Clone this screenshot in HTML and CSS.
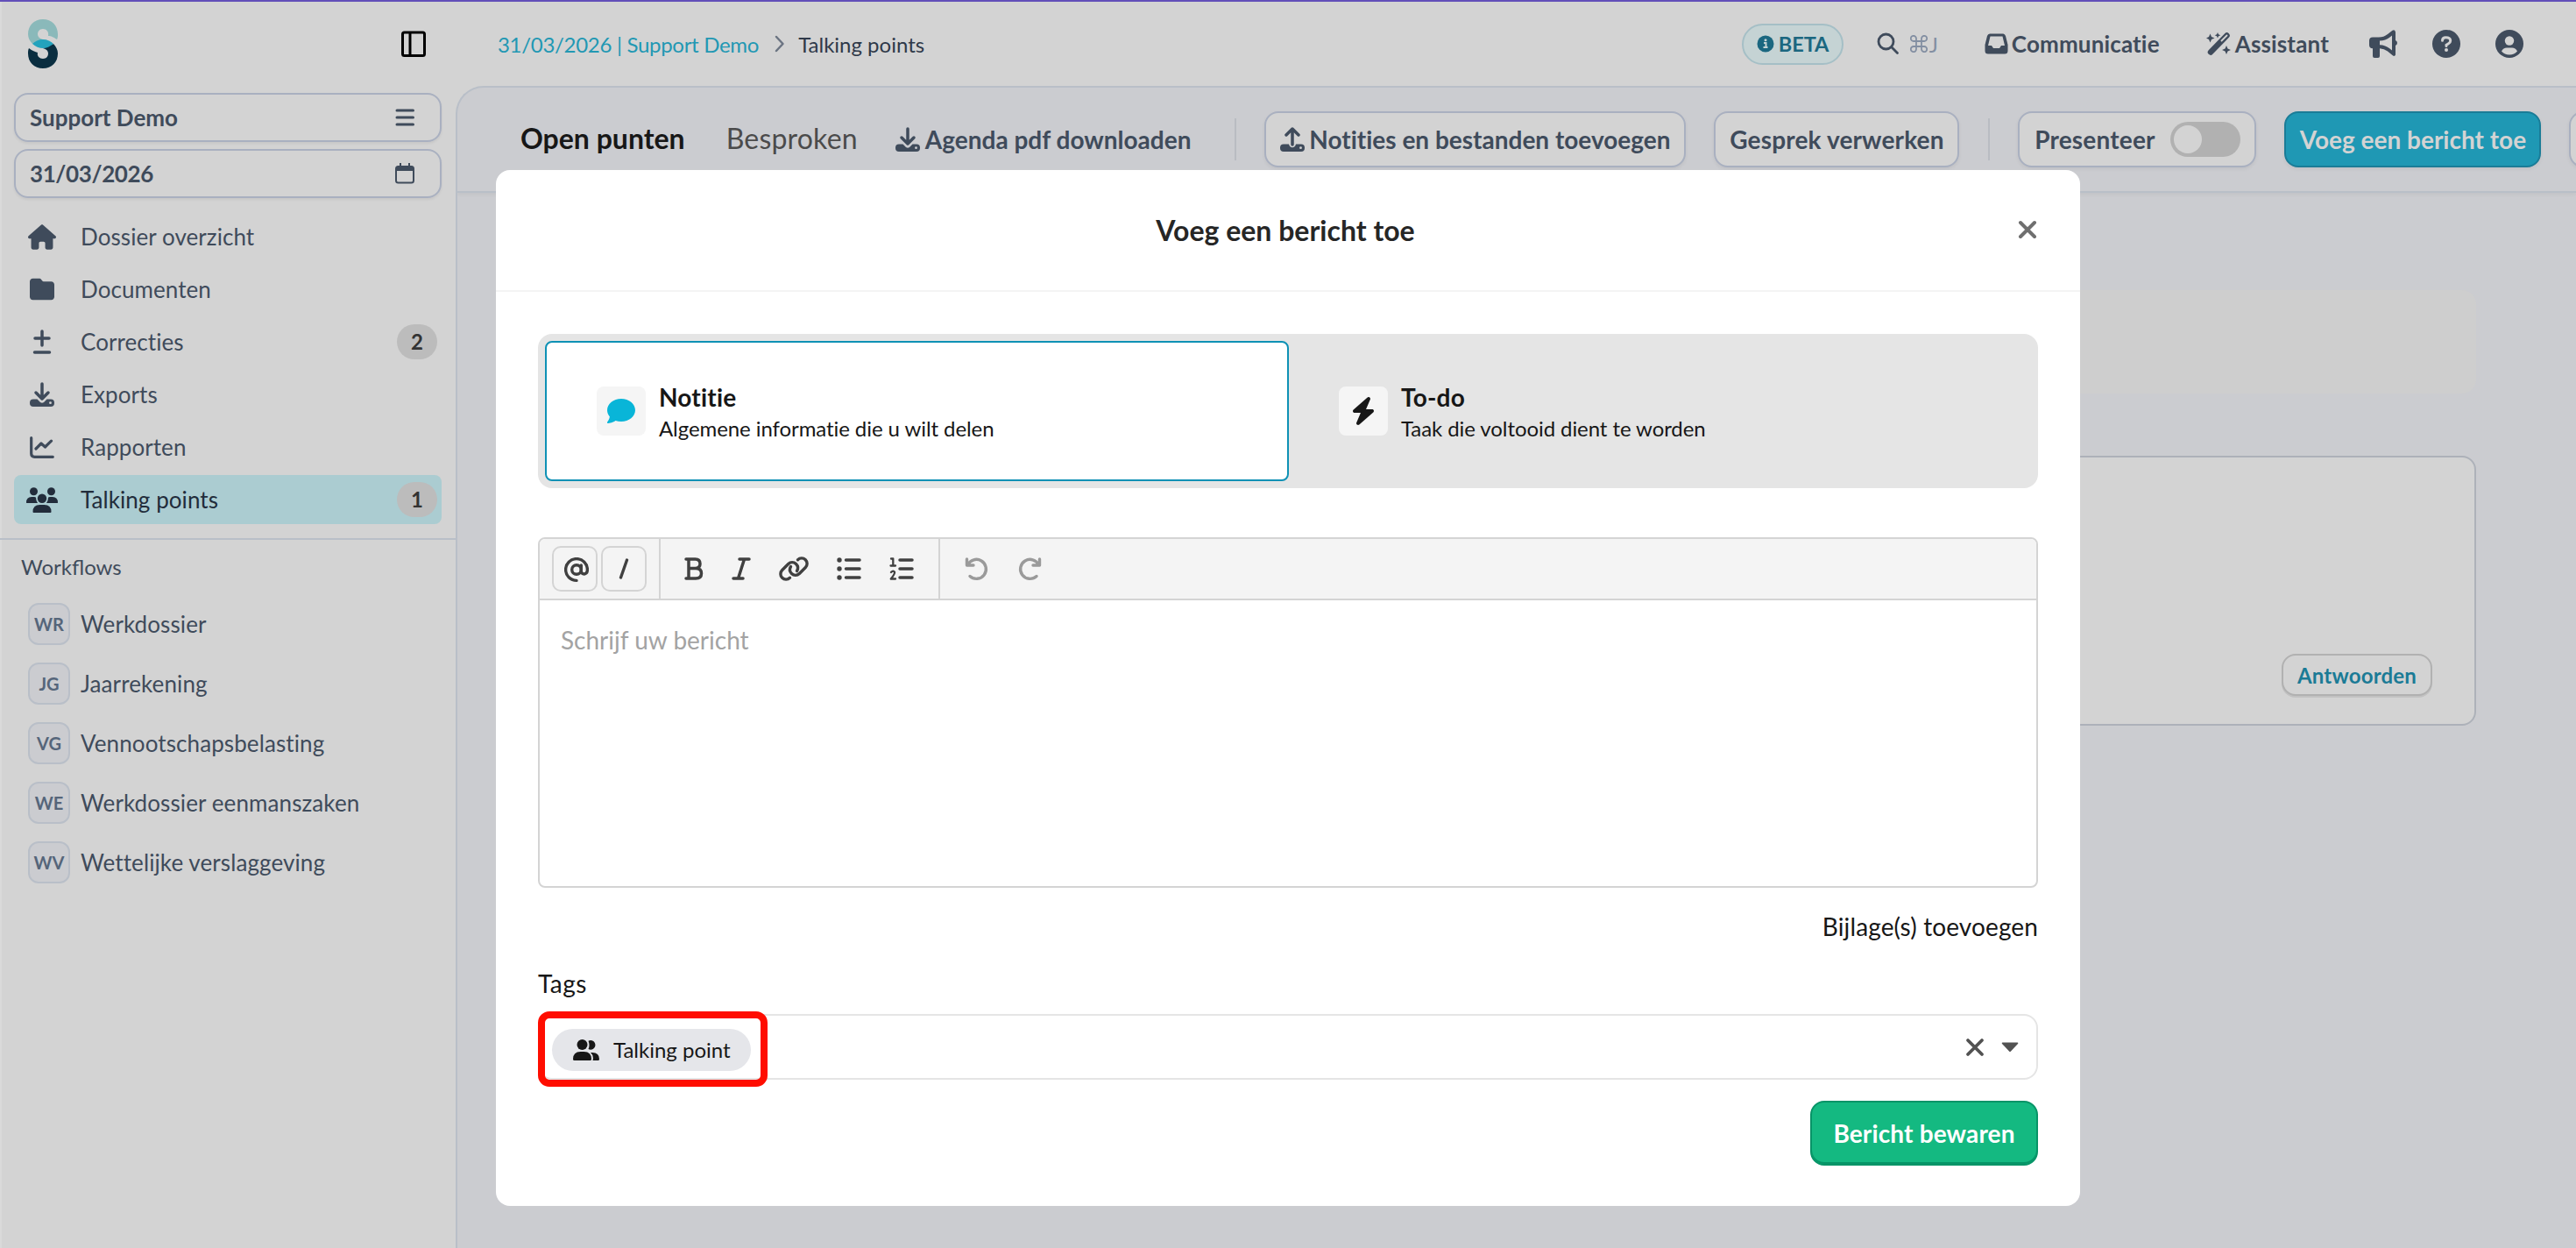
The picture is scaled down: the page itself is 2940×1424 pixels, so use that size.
FILE: index.html
```
<!DOCTYPE html>
<html lang="nl">
<head>
    <meta charset="UTF-8">
    <meta name="viewport" content="width=device-width, initial-scale=1.0">
    <title>Talking points</title>
    <link rel="stylesheet" href="styles.css">
</head>
<body>

<div class="app">
    <aside class="sidebar">
        <div class="sidebar-top">
            <svg class="logo" width="34" height="56" viewBox="0 0 34 56">
                <path d="M5 28 C2 25 0 21 0 17 C0 7 7 0 17 0 C27 0 34 7 34 17 C34 19 34 21 33 23 C28 20 27 19 23 19 C24 14 21 11 17 11 C13 11 11 14 11 17 C11 20 13 22 17 23 L28 28 Z" fill="#8ab9ba"/>
                <path d="M1 33 C5 36 8 37 11 38 C10 42 13 45 17 45 C21 45 23 42 23 39 C23 36 21 34 17 33 L29 28 C32 31 34 35 34 39 C34 49 27 56 17 56 C7 56 0 49 0 39 C0 37 0 35 1 33 Z" fill="#0a2e40"/>
                <path d="M5 28 C8 25 12 23 17 23 C22 23 26 25 29 28 C25 31 21 33 17 33 C13 33 8 31 5 28 Z" fill="#23a3bd"/>
            </svg>
            <svg width="28" height="30" viewBox="0 0 28 30" fill="none" stroke="#000" stroke-width="3">
                <rect x="1.5" y="2" width="25" height="26.5" rx="2"/>
                <path d="M10 2 V28"/>
            </svg>
        </div>

        <div class="select-box">
            <span>Support Demo</span>
            <svg width="24" height="22" viewBox="0 0 24 22" stroke="#3f4b5b" stroke-width="3" stroke-linecap="round">
                <path d="M3 3 H21.500 M3 11 H21.500 M3 19 H21.500"/>
            </svg>
        </div>
        <div class="select-box date">
            <span>31/03/2026</span>
            <svg width="24" height="26" viewBox="0 0 24 26">
                <rect x="2" y="5" width="20" height="18.500" rx="2.500" fill="none" stroke="#3f4b5b" stroke-width="2"/>
                <path d="M2 5 H22 V10 H2 Z M6 1 h2 v4 h-2 Z M16 1 h2 v4 h-2 Z" fill="#3f4b5b"/>
            </svg>
        </div>

        <nav class="menu">
            <a class="menu-item">
                <span class="menu-icon"><svg width="32" height="29" viewBox="0 0 576 512" fill="currentColor"><path d="M575.8 255.5c0 18-15 32.100-32 32.100h-32l.7 160.200c0 2.700-.2 5.400-.5 8.100V472c0 22.100-17.900 40-40 40H392c-22.100 0-40-17.900-40-40V384c0-17.700-14.300-32-32-32H256c-17.700 0-32 14.300-32 32v88c0 22.100-17.900 40-40 40H104c-22.100 0-40-17.900-40-40V287.600H32c-18 0-32-14-32-32.100c0-9 3-17 10-24L266.400 8c7-7 15-8 22-8s15 2 21 7L564.800 231.500c8 7 12 15 11 24z"/></svg></span>
                <span>Dossier overzicht</span>
            </a>
            <a class="menu-item">
                <span class="menu-icon"><svg width="28" height="28" viewBox="0 0 512 512" fill="currentColor"><path d="M64 480H448c35.300 0 64-28.700 64-64V160c0-35.300-28.700-64-64-64H288c-10.100 0-19.600-4.700-25.600-12.800L243.200 57.600C231.100 41.500 212.100 32 192 32H64C28.700 32 0 60.700 0 96V416c0 35.300 28.700 64 64 64z"/></svg></span>
                <span>Documenten</span>
            </a>
            <a class="menu-item">
                <span class="menu-icon"><svg width="22" height="28" viewBox="0 0 22 28" stroke="currentColor" stroke-width="3.500" stroke-linecap="round"><path d="M11 2 V18 M3 10 H19 M2.500 26 H19.500"/></svg></span>
                <span>Correcties</span>
                <span class="count">2</span>
            </a>
            <a class="menu-item">
                <span class="menu-icon"><svg width="28" height="28" viewBox="0 0 28 28" fill="none"><path d="M4 19.500 H8.500 L12 23 Q14 24.500 16 23 L19.500 19.500 H24 Q28 19.500 28 23.500 V24 Q28 28 24 28 H4 Q0 28 0 24 V23.500 Q0 19.500 4 19.500 Z" fill="currentColor"/><circle cx="23.500" cy="23.700" r="1.400" fill="#d3d3d3"/><path d="M14 2 V18.500 M7 12 L14 19 L21 12" stroke="currentColor" stroke-width="3.500" stroke-linecap="round" stroke-linejoin="round"/></svg></span>
                <span>Exports</span>
            </a>
            <a class="menu-item">
                <span class="menu-icon"><svg width="28" height="25" viewBox="0 0 28 25" fill="none" stroke="currentColor" stroke-width="3.200" stroke-linecap="round" stroke-linejoin="round"><path d="M1.700 1.700 V19.500 Q1.700 23.300 5.500 23.300 H26.300 M7 14 L13 8 L17.500 12 L24.500 5.200"/></svg></span>
                <span>Rapporten</span>
            </a>
            <a class="menu-item active">
                <span class="menu-icon"><svg width="36" height="29" viewBox="0 0 36 29" fill="currentColor"><circle cx="8.500" cy="4.800" r="4.500"/><circle cx="28.500" cy="4.800" r="4.500"/><circle cx="18" cy="12.800" r="5.200"/><path d="M0 17.500 Q0 11 6 11 H9 Q11 11 11 12 Q11 15.500 13 18 H1 Q0 18 0 17.500 Z M36 17.500 Q36 11 30 11 H27 Q25 11 25 12 Q25 15.500 23 18 H35 Q36 18 36 17.500 Z M7.500 28 Q7.500 20 15.500 20 H20.500 Q28.500 20 28.500 28 Q28.500 29 27.500 29 H8.500 Q7.500 29 7.500 28 Z"/></svg></span>
                <span>Talking points</span>
                <span class="count">1</span>
            </a>
        </nav>

        <div class="workflows">
            <div class="workflows-title">Workflows</div>
            <a class="workflow"><span class="code">WR</span>Werkdossier</a>
            <a class="workflow"><span class="code">JG</span>Jaarrekening</a>
            <a class="workflow"><span class="code">VG</span>Vennootschapsbelasting</a>
            <a class="workflow"><span class="code">WE</span>Werkdossier eenmanszaken</a>
            <a class="workflow"><span class="code">WV</span>Wettelijke verslaggeving</a>
        </div>
    </aside>

    <main class="main">
        <header class="topbar">
            <div class="breadcrumb">
                <a>31/03/2026 | Support Demo</a>
                <svg width="12" height="20" viewBox="0 0 12 20" fill="none" stroke="#6b7482" stroke-width="2.500" stroke-linecap="round" stroke-linejoin="round"><path d="M2 2 L9.500 10 L2 18"/></svg>
                <span>Talking points</span>
            </div>
            <div class="top-actions">
                <span class="beta">
                    <svg width="20" height="20" viewBox="0 0 20 20"><circle cx="10" cy="10" r="9.500" fill="#1b6780"/><circle cx="10" cy="5.800" r="1.500" fill="#c5d3d4"/><path d="M8 9 H10.500 V14 M7.500 14 H12.500" stroke="#c5d3d4" stroke-width="2" fill="none"/></svg>
                    BETA
                </span>
                <span class="search">
                    <svg width="26" height="26" viewBox="0 0 26 26" fill="none" stroke="#3f4b5b" stroke-width="2.800" stroke-linecap="round"><circle cx="10.500" cy="10.500" r="8.500"/><path d="M16.800 16.800 L23.500 23.500"/></svg>
                    <span class="shortcut">
                        <svg width="20" height="20" viewBox="0 0 20 20" fill="none" stroke="#838fa2" stroke-width="1.800"><path d="M7 13 H4.200 A3.100 3.100 0 1 0 7 16 V4 A3.100 3.100 0 1 0 4 7 H16 A3.100 3.100 0 1 0 13 4 V16 A3.100 3.100 0 1 0 16 13 Z"/></svg>J
                    </span>
                </span>
                <a class="top-link communicatie">
                    <svg width="27" height="24" viewBox="0 0 27 24"><path d="M6 0.500 H21 Q23.200 0.500 24 3 L26.500 13 V20 Q26.500 23.500 23 23.500 H4 Q0.500 23.500 0.500 20 V13 L3 3 Q3.800 0.500 6 0.500 Z M6.500 3.500 L4 14 H8 L10 17 H17 L19 14 H23 L20.500 3.500 Z" fill="#3f4b5b" fill-rule="evenodd"/></svg>
                    Communicatie
                </a>
                <a class="top-link assistant">
                    <svg width="28" height="26" viewBox="0 0 28 26"><path d="M5 22.500 L23.500 3.500" stroke="#3f4b5b" stroke-width="6.500" stroke-linecap="round"/><path d="M17.500 9.500 L23.500 3.500" stroke="#d3d3d3" stroke-width="1.800" stroke-linecap="round"/><path d="M4.500 1.500 L6 5 L9.500 6.500 L6 8 L4.500 11.500 L3 8 L0 6.500 L3 5 Z M13 0 L14 2.300 L16.300 3.300 L14 4.300 L13 6.600 L12 4.300 L9.700 3.300 L12 2.300 Z M23 15 L24.500 18.500 L28 20 L24.500 21.500 L23 25 L21.500 21.500 L18 20 L21.500 18.500 Z" fill="#3f4b5b"/></svg>
                    Assistant
                </a>
                <svg class="top-icon" width="32" height="32" viewBox="0 0 32 32"><path d="M30 2.500 V12 Q32 13 32 15 Q32 17 30 18 V28.500 Q29 31 26.500 29 L21 24.500 Q17 21.500 12 21.300 V30 Q12 32 10 32 H6 Q4 32 4 30 V21.300 Q0 21.300 0 17.300 V12.500 Q0 8.500 4 8.500 H11 Q16.500 8.500 21 5 L26.500 0.800 Q29 -1 30 2.500 Z M26 6.500 L23.500 8.500 Q18.500 12.500 12 12.500 V17.300 Q18.500 17.500 23.500 21.500 L26 23.500 Z" fill="#3f4b5b" fill-rule="evenodd"/></svg>
                <svg class="top-icon" width="32" height="32" viewBox="0 0 32 32" fill="none"><circle cx="16" cy="16" r="16" fill="#3f4b5b"/><path d="M11.500 12.300 Q11.500 8.700 15.500 8.700 Q20.700 8.700 20.700 12.500 Q20.700 14.500 18.500 15.700 L16 17.300 V18.500" stroke="#d3d3d3" stroke-width="3" stroke-linecap="round"/><circle cx="16" cy="23" r="2" fill="#d3d3d3"/></svg>
                <svg class="top-icon" width="32" height="32" viewBox="0 0 32 32"><circle cx="16" cy="16" r="16" fill="#3f4b5b"/><circle cx="16" cy="12.500" r="5.200" fill="#d3d3d3"/><path d="M7 24.500 Q9 20.500 13 20.500 H19 Q23 20.500 25 24.500 Q21.500 28.500 16 28.500 Q10.500 28.500 7 24.500 Z" fill="#d3d3d3"/></svg>
            </div>
        </header>

        <section class="panel">
            <div class="toolbar">
                <span class="tab tab-active">Open punten</span>
                <span class="tab">Besproken</span>
                <a class="agenda">
                    <svg width="28" height="28" viewBox="0 0 28 28" fill="none"><path d="M4 19.500 H8.500 L12 23 Q14 24.500 16 23 L19.500 19.500 H24 Q28 19.500 28 23.500 V24 Q28 28 24 28 H4 Q0 28 0 24 V23.500 Q0 19.500 4 19.500 Z" fill="#3f4b5b"/><circle cx="23.500" cy="23.700" r="1.400" fill="#cbccd0"/><path d="M14 2 V18.500 M7 12 L14 19 L21 12" stroke="#3f4b5b" stroke-width="3.500" stroke-linecap="round" stroke-linejoin="round"/></svg>
                    Agenda pdf downloaden
                </a>
                <span class="divider"></span>
                <button class="btn btn-notes">
                    <svg width="28" height="28" viewBox="0 0 28 28" fill="none"><path d="M4 19.500 H10 Q11 23.300 14 23.300 Q17 23.300 18 19.500 H24 Q28 19.500 28 23.500 V24 Q28 28 24 28 H4 Q0 28 0 24 V23.500 Q0 19.500 4 19.500 Z" fill="#3f4b5b"/><circle cx="23.500" cy="23.700" r="1.400" fill="#d3d3d3"/><path d="M14 20 V2.500 M7 9 L14 2 L21 9" stroke="#3f4b5b" stroke-width="3.500" stroke-linecap="round" stroke-linejoin="round"/></svg>
                    Notities en bestanden toevoegen
                </button>
                <button class="btn btn-process">Gesprek verwerken</button>
                <span class="divider"></span>
                <button class="btn btn-present">Presenteer <span class="toggle"></span></button>
                <button class="btn btn-primary">Voeg een bericht toe</button>
                <button class="btn btn-more"></button>
            </div>
            <div class="content">
                <div class="notice"></div>
                <div class="card">
                    <button class="reply">Antwoorden</button>
                </div>
            </div>
        </section>
    </main>
</div>

<div class="modal">
    <div class="modal-header">
        <h2>Voeg een bericht toe</h2>
        <svg class="modal-close" width="22" height="22" viewBox="0 0 22 22" stroke="#6f6f6f" stroke-width="4" stroke-linecap="round"><path d="M3 3 L19 19 M19 3 L3 19"/></svg>
    </div>
    <div class="modal-body">
        <div class="types">
            <div class="type selected">
                <span class="type-icon"><svg width="32" height="32" viewBox="0 0 512 512" fill="#09b5d8"><path d="M512 240c0 114.900-114.600 208-256 208c-37.100 0-72.300-6.400-104.100-17.900c-11.900 8.700-31.300 20.600-54.300 30.600C73.600 471.100 44.700 480 16 480c-6.500 0-12.300-3.900-14.800-9.900c-2.500-6-1.100-12.800 3.400-17.400c10-10 32-40 41.800-91.900C17.700 326.800 0 285.100 0 240C0 125.100 114.600 32 256 32s256 93.100 256 208z"/></svg></span>
                <div>
                    <div class="type-title">Notitie</div>
                    <div class="type-text">Algemene informatie die u wilt delen</div>
                </div>
            </div>
            <div class="type">
                <span class="type-icon"><svg width="28" height="32" viewBox="0 0 448 512" fill="#171717"><path d="M349.400 44.600c5.900-13.700 1.500-29.700-10.600-38.500s-28.600-8-39.900 1.800l-256 224c-10 8.800-13.600 22.900-8.900 35.300S50.700 288 64 288H175.500L98.600 467.400c-5.900 13.700-1.500 29.700 10.600 38.500s28.600 8 39.900-1.800l256-224c10-8.800 13.600-22.900 8.900-35.300s-16.600-20.700-30-20.700H272.500L349.400 44.600z"/></svg></span>
                <div>
                    <div class="type-title">To-do</div>
                    <div class="type-text">Taak die voltooid dient te worden</div>
                </div>
            </div>
        </div>

        <div class="editor">
            <div class="editor-bar">
                <div class="group group-keys">
                    <span class="key key-at"><svg width="28" height="29" viewBox="0 0 28 29" fill="none" stroke="#404040" stroke-width="3.400" stroke-linecap="round"><circle cx="14" cy="14" r="5.300"/><path d="M19.300 9 V15.500 Q19.500 19 22.800 19 Q26.400 18.500 26.400 14 A12.400 12.400 0 1 0 14 26.400"/></svg></span>
                    <span class="key"><svg width="12" height="24" viewBox="0 0 12 24" stroke="#404040" stroke-width="3.400" stroke-linecap="round"><path d="M9.500 2 L2.500 22"/></svg></span>
                </div>
                <div class="group group-format">
                    <svg width="22" height="26" viewBox="0 0 22 26" fill="none" stroke="#404040" stroke-width="3.500" stroke-linecap="round" stroke-linejoin="round"><path d="M2 2 H12.500 Q18 2 18 7.300 Q18 12.500 12.500 12.500 H5 M13 12.500 Q19.500 12.500 19.500 18.200 Q19.500 24 13 24 H2 M5 2 V24"/></svg>
                    <svg width="22" height="26" viewBox="0 0 22 26" fill="none" stroke="#404040" stroke-width="3.500" stroke-linecap="round"><path d="M9 2 H20 M2 24 H13 M14.500 2 L7.500 24"/></svg>
                    <svg width="34" height="28" viewBox="0 0 34 28" fill="none" stroke="#404040" stroke-width="3.400" stroke-linecap="round"><path d="M12.500 24.300 A6.200 6.200 0 0 1 3.700 15.500 L10.700 8.500 A6.200 6.200 0 0 1 19.500 8.500 A6.500 6.500 0 0 1 20.500 16.500"/><path d="M21.500 3.700 A6.200 6.200 0 0 1 30.300 12.500 L23.300 19.500 A6.200 6.200 0 0 1 14.500 19.500 A6.500 6.500 0 0 1 13.500 11.500"/></svg>
                    <svg width="28" height="28" viewBox="0 0 28 28" stroke="#404040" stroke-width="3.500" stroke-linecap="round"><path d="M10.500 4 H26 M10.500 14 H26 M10.500 24 H26"/><g fill="#404040" stroke="none"><circle cx="3" cy="4" r="2.700"/><circle cx="3" cy="14" r="2.700"/><circle cx="3" cy="24" r="2.700"/></g></svg>
                    <svg width="28" height="28" viewBox="0 0 28 28" fill="none" stroke="#404040" stroke-width="3.500" stroke-linecap="round"><path d="M12 4 H26 M12 14 H26 M12 24 H26"/><path d="M2 2.500 H4.300 V10 M1.500 10.500 H7 M2 18 Q4.500 15.500 6 17.700 Q6.500 19.700 1.800 25.500 H7" stroke-width="2.300" stroke-linejoin="round"/></svg>
                </div>
                <div class="group group-history">
                    <svg width="27" height="28" viewBox="0 0 27 28" fill="none" stroke="#9a9a9a" stroke-width="3.400" stroke-linecap="round" stroke-linejoin="round"><path d="M2.500 3 V10 H10 M3.500 9.500 A11 11 0 1 1 6 22.500"/></svg>
                    <svg width="27" height="28" viewBox="0 0 27 28" fill="none" stroke="#9a9a9a" stroke-width="3.400" stroke-linecap="round" stroke-linejoin="round"><path d="M24.500 3 V10 H17 M23.500 9.500 A11 11 0 1 0 21 22.500"/></svg>
                </div>
            </div>
            <div class="editor-area">Schrijf uw bericht</div>
        </div>

        <div class="attach">Bijlage(s) toevoegen</div>

        <div class="tags-label">Tags</div>
        <div class="tags-field">
            <span class="chip">
                <svg width="30" height="24" viewBox="0 0 30 24" fill="#171717"><circle cx="10.500" cy="6" r="6"/><path d="M0 22.500 Q0 14 8.500 14 H12.500 Q21 14 21 22.500 Q21 24 19.500 24 H1.500 Q0 24 0 22.500 Z M17.500 1.800 A5.300 5.300 0 1 1 17.500 11 Q19.500 6.500 17.500 1.800 Z M20 15 H22 Q30 15 30 22.500 Q30 24 28.500 24 H22.500 Q24 18.500 20 15 Z"/></svg>
                Talking point
            </span>
            <span class="highlight"></span>
            <svg class="clear" width="22" height="22" viewBox="0 0 22 22" stroke="#525252" stroke-width="3.800" stroke-linecap="round"><path d="M3 3 L19 19 M19 3 L3 19"/></svg>
            <svg class="caret" width="20" height="12" viewBox="0 0 20 12" fill="#525252"><path d="M1.500 0.500 H18.500 Q19.800 0.800 19 2 L11 10.500 Q10 11.500 9 10.500 L1 2 Q0.200 0.800 1.500 0.500 Z"/></svg>
        </div>

        <button class="save">Bericht bewaren</button>
    </div>
</div>

</body>
</html>
```
FILE: styles.css
```
* {
    box-sizing: border-box;
}
body {
    margin: 0;
    height: 1424px;
    overflow: hidden;
    background: #d3d3d3;
    font-family: Lato, "Liberation Sans", sans-serif;
    font-variant-ligatures: none;
    font-size: 28px;
    color: #171717;
}
svg {
    display: block;
    flex-shrink: 0;
}
button {
    font: inherit;
    margin: 0;
}
.app {
    display: flex;
    height: 1424px;
    border-top: 2px solid #624fb9;
}

/* sidebar */
.sidebar {
    width: 520px;
    flex-shrink: 0;
    box-shadow: inset 2px 0 0 #dadada;
    color: #3f4b5b;
    font-size: 26px;
}
.sidebar-top {
    display: flex;
    justify-content: space-between;
    align-items: center;
    height: 104px;
    padding: 0 34px 8px 32px;
}
.select-box {
    display: flex;
    justify-content: space-between;
    align-items: center;
    height: 56px;
    margin: 0 16px 8px;
    padding: 0 28px 0 16px;
    border: 2px solid #a9b0c0;
    border-radius: 16px;
    box-shadow: 0 2px 3px rgba(0, 0, 0, 0.06);
    font-weight: 700;
}
.date {
    letter-spacing: -0.4px;
}
.menu {
    display: flex;
    flex-direction: column;
    gap: 4px;
    padding: 8px 16px 16px;
    border-bottom: 2px solid #b9bfc8;
}
.menu-item {
    display: flex;
    align-items: center;
    height: 56px;
    padding: 0 5px 0 14px;
    border-radius: 8px;
    letter-spacing: 0.07px;
}
.menu-icon {
    display: flex;
    justify-content: center;
    width: 36px;
    margin-right: 26px;
}
.active {
    background: #abccd1;
    color: #222c3b;
}
.count {
    width: 46px;
    height: 40px;
    margin-left: auto;
    border-radius: 20px;
    background: #bcbcbc;
    color: #333;
    font-size: 24px;
    font-weight: 700;
    line-height: 40px;
    text-align: center;
}
.workflows-title {
    height: 62px;
    padding-left: 24px;
    font-size: 24px;
    line-height: 62px;
    letter-spacing: 0;
    font-variant-ligatures: normal;
}
.workflow {
    display: flex;
    align-items: center;
    height: 68px;
    padding-left: 32px;
    letter-spacing: 0.1px;
}
.code {
    width: 48px;
    height: 48px;
    margin-right: 12px;
    border: 2px solid #b9bfc8;
    border-radius: 12px;
    background: #cbccd0;
    color: #55657a;
    font-size: 20px;
    font-weight: 700;
    line-height: 45px;
    letter-spacing: 0;
    text-align: center;
}

/* top bar */
.main {
    flex: 1;
    min-width: 0;
    display: flex;
    flex-direction: column;
}
.topbar {
    display: flex;
    justify-content: space-between;
    align-items: center;
    height: 96px;
    padding: 0 60px 0 48px;
}
.breadcrumb {
    display: flex;
    align-items: center;
    font-size: 24px;
    color: #2f3949;
}
.breadcrumb a {
    color: #2298b3;
    letter-spacing: -0.3px;
}
.breadcrumb svg {
    margin: 0 15px 0 18px;
}
.top-actions {
    display: flex;
    align-items: center;
    color: #3f4b5b;
}
.beta {
    display: flex;
    align-items: center;
    gap: 5px;
    width: 116px;
    height: 47px;
    padding-left: 15px;
    border: 2px solid #a5bfc6;
    border-radius: 24px;
    background: #c5d3d4;
    color: #1b6780;
    font-size: 23.5px;
    font-weight: 700;
}
.search {
    display: flex;
    align-items: center;
    gap: 12px;
    margin: 0 53px 0 38px;
}
.shortcut {
    display: flex;
    align-items: center;
    gap: 2px;
    color: #838fa2;
    font-size: 24px;
}
.top-link {
    display: flex;
    align-items: center;
    gap: 4px;
    font-size: 26px;
    font-weight: 700;
    letter-spacing: 0.15px;
}
.assistant {
    gap: 5px;
    margin: 0 6px 0 53px;
}
.top-icon {
    margin-left: 40px;
}

/* panel with toolbar */
.panel {
    flex: 1;
    overflow: hidden;
    border-top: 2px solid #b9bfc8;
    border-left: 2px solid #b9bfc8;
    border-top-left-radius: 32px;
    background: #cbccd0;
}
.toolbar {
    display: flex;
    align-items: center;
    height: 120px;
    padding-left: 72px;
    border-bottom: 2px solid #b9bfc8;
    box-shadow: 0 2px 4px rgba(0, 0, 0, 0.05);
    white-space: nowrap;
}
.toolbar > * {
    flex-shrink: 0;
}
.tab {
    margin-right: 48px;
    padding-bottom: 4px;
    font-size: 32px;
    color: #4b4b4b;
}
.tab-active {
    margin-right: 47px;
    font-weight: 700;
    color: #171717;
}
.tab:not(.tab-active) {
    letter-spacing: 0.2px;
}
.agenda {
    display: flex;
    align-items: center;
    gap: 6px;
    color: #3f4b5b;
    font-weight: 700;
}
.tab + .agenda {
    margin-left: -5px;
}
.divider {
    width: 2px;
    height: 48px;
    margin: 0 32px 0 50px;
    background: #b9bcc2;
}
.btn {
    display: flex;
    align-items: center;
    justify-content: center;
    height: 64px;
    padding: 0;
    border: 2px solid #a9b0c0;
    border-radius: 16px;
    background: #d3d3d3;
    box-shadow: 0 2px 4px rgba(0, 0, 0, 0.06);
    color: #3f4b5b;
    font-weight: 700;
}
.btn-notes {
    width: 481px;
    gap: 5px;
}
.btn-process {
    width: 280px;
    margin-left: 32px;
    letter-spacing: 0.15px;
}
.btn-process + .divider {
    margin-left: 33px;
}
.btn-present {
    width: 272px;
    gap: 17px;
    letter-spacing: 0.2px;
}
.toggle {
    width: 80px;
    height: 40px;
    padding: 4px;
    border-radius: 20px;
    background: #b1b1b1;
}
.toggle::before {
    content: "";
    display: block;
    width: 32px;
    height: 32px;
    border-radius: 50%;
    background: #d3d3d3;
}
.btn-primary {
    width: 293px;
    margin: 0 32px;
    border-color: #1a7c97;
    background: #1f98b4;
    color: #d3d3d3;
}
.btn-more {
    width: 64px;
}
.content {
    padding: 111px 114px 0 72px;
}
.notice {
    height: 118px;
    margin-bottom: 71px;
    border-radius: 16px;
    background: #cecece;
}
.card {
    display: flex;
    justify-content: flex-end;
    align-items: flex-end;
    height: 308px;
    padding: 0 48px 32px;
    border: 2px solid #adb1b9;
    border-radius: 16px;
    background: #d3d3d3;
}
.reply {
    width: 172px;
    height: 48px;
    padding: 0;
    border: 2px solid #b1b1b1;
    border-radius: 16px;
    background: #d3d3d3;
    box-shadow: 0 2px 0 #c1c1c1;
    color: #1b7b96;
    font-size: 24px;
    font-weight: 700;
    letter-spacing: 0.2px;
}

/* modal */
.modal {
    position: absolute;
    top: 194px;
    left: 566px;
    width: 1808px;
    height: 1182px;
    border-radius: 16px;
    background: #fff;
}
.modal-header {
    display: flex;
    align-items: center;
    height: 139px;
    padding: 0 49px 0 43px;
    border-bottom: 2px solid #f4f4f4;
}
.modal-header h2 {
    flex: 1;
    margin: 0 -22px 0 0;
    font-size: 32px;
    font-weight: 700;
    text-align: center;
    color: #262626;
}
.modal-close {
    margin-bottom: 2px;
}
.modal-body {
    padding: 48px;
}
.types {
    display: flex;
    height: 176px;
    margin-bottom: 56px;
    padding: 8px;
    border-radius: 16px;
    background: #e5e5e5;
}
.type {
    display: flex;
    flex: 1;
    align-items: center;
    gap: 15px;
    padding-left: 55px;
    border: 2px solid transparent;
    border-radius: 8px;
}
.selected {
    padding-left: 57px;
    border-color: #0e91b5;
    background: #fff;
}
.type-icon {
    display: flex;
    align-items: center;
    justify-content: center;
    width: 56px;
    height: 56px;
    border-radius: 8px;
    background: #f5f5f5;
}
.type-title {
    font-weight: 700;
    line-height: 40px;
    letter-spacing: 0.2px;
}
.type-text {
    font-size: 24px;
    line-height: 32px;
    letter-spacing: -0.08px;
}
.editor {
    height: 400px;
    border: 2px solid #d4d4d4;
    border-radius: 8px;
    overflow: hidden;
}
.editor-bar {
    display: flex;
    height: 70px;
    border-bottom: 2px solid #d4d4d4;
    background: #f4f4f4;
}
.group {
    display: flex;
    align-items: center;
    border-right: 2px solid #d4d4d4;
}
.group-keys {
    gap: 4px;
    width: 138px;
    padding-left: 14px;
}
.key {
    display: flex;
    align-items: center;
    justify-content: center;
    width: 52px;
    height: 52px;
    border: 2px solid #d4d4d4;
    border-radius: 10px;
}
.key-at {
    padding: 3px 0 0 3px;
}
.group-format {
    gap: 32px;
    width: 319px;
    padding-left: 27px;
}
.group-history {
    gap: 34px;
    padding-left: 28px;
    border-right: 0;
}
.editor-area {
    padding: 28px 24px;
    color: #a3a3a3;
}
.attach {
    margin-top: 27px;
    line-height: 34px;
    letter-spacing: 0.12px;
    text-align: right;
}
.tags-label {
    margin: 31px 0 18px;
    line-height: 34px;
    letter-spacing: 0.5px;
}
.tags-field {
    position: relative;
    display: flex;
    align-items: center;
    height: 75px;
    padding: 0 20px 0 14px;
    border: 2px solid #e5e5e5;
    border-radius: 16px;
}
.chip {
    display: flex;
    align-items: center;
    gap: 16px;
    width: 227px;
    height: 48px;
    margin-top: 6px;
    padding-left: 24px;
    border-radius: 24px;
    background: #e5e6ea;
    font-size: 24px;
}
/* red frame round the chip */
.highlight {
    position: absolute;
    top: -5px;
    left: -2px;
    width: 262px;
    height: 86px;
    border: 8px solid #ff0d00;
    border-radius: 13px;
}
.clear {
    margin-left: auto;
}
.caret {
    margin-left: 19px;
}
.save {
    display: block;
    width: 260px;
    height: 74px;
    margin: 24px 0 0 auto;
    padding: 0;
    border: 2px solid #079467;
    border-radius: 16px;
    background: #14b981;
    box-shadow: inset 0 -2px 0 #079467;
    color: #fff;
    font-weight: 700;
    letter-spacing: 0.15px;
}
```
